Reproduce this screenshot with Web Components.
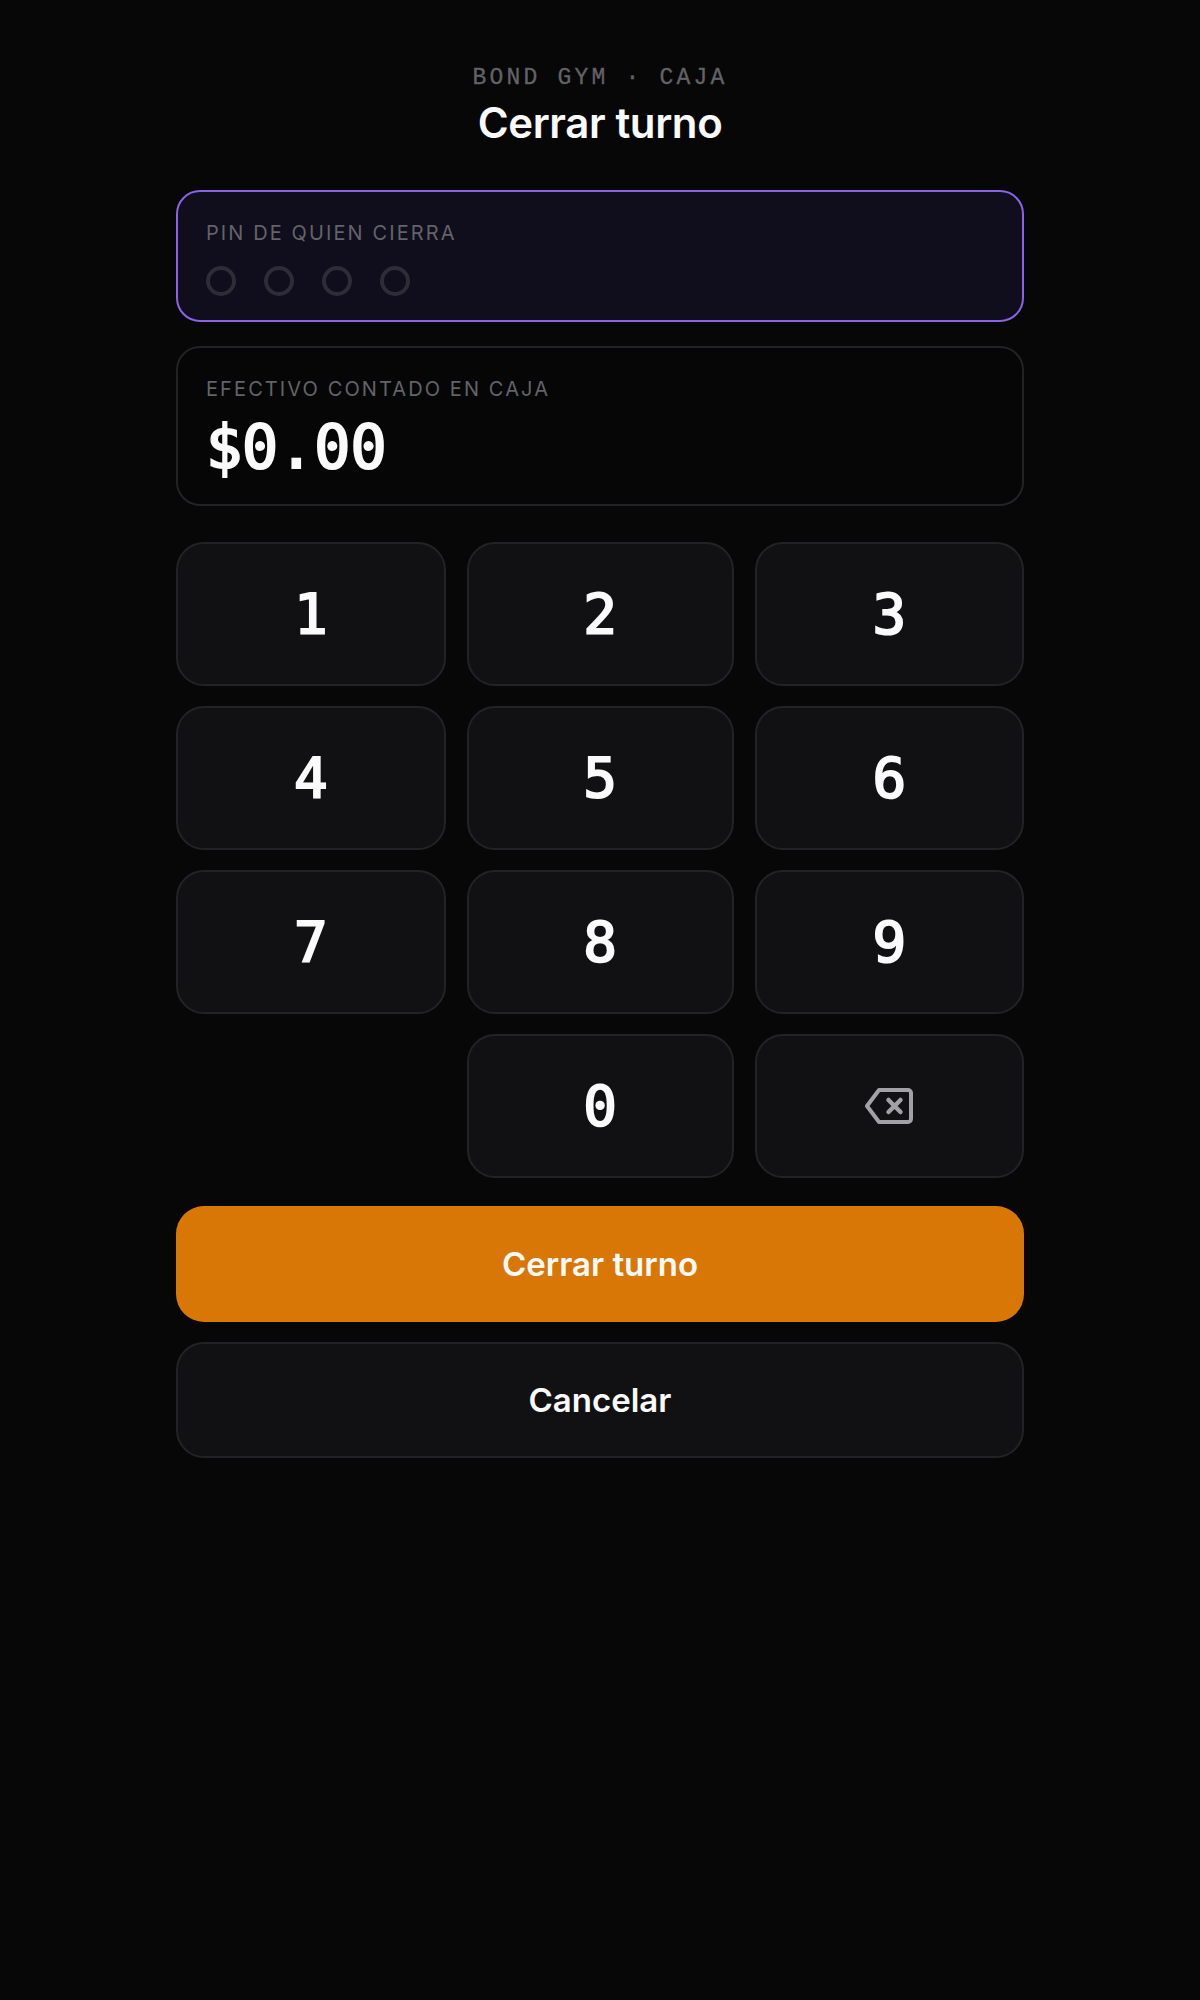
<!DOCTYPE html>
<html lang="es"><head><meta charset="utf-8"><title>Cerrar turno</title>
<style>
html,body{margin:0;background:#070708;height:100%}
body{font-family:Inter,"Noto Sans",sans-serif;color:#fafafa}
</style></head><body>
<close-shift>
  <span slot="eyebrow">BOND GYM · CAJA</span>
  <span slot="title">Cerrar turno</span>
  <field-box slot="pin" active label="PIN DE QUIEN CIERRA"><pin-dots></pin-dots></field-box>
  <field-box slot="cash" label="EFECTIVO CONTADO EN CAJA"><span style="display:block;font:400 60px/72px 'DejaVu Sans Mono',monospace;-webkit-text-stroke:2.2px #fafafa;color:#fafafa;margin-top:6px">$0.00</span></field-box>
  <key-pad slot="pad"></key-pad>
  <action-btn slot="a1" primary>Cerrar turno</action-btn>
  <action-btn slot="a2">Cancelar</action-btn>
</close-shift>
<script>
function def(n,html){customElements.define(n,class extends HTMLElement{connectedCallback(){if(this.shadowRoot)return;const s=this.attachShadow({mode:'open'});s.innerHTML=html(this);}});}
def('close-shift',()=>`<style>
:host{display:block;padding:66px 176px 0}
.eb{text-align:center;font:400 23px/24px "Liberation Mono",monospace;letter-spacing:3.2px;-webkit-text-stroke:.3px #626267;color:#626267;height:24px;}
.t{text-align:center;font:600 42px/50px Inter,sans-serif;letter-spacing:-.4px;color:#fafafa;margin:8px 0 42px}
.st{display:flex;flex-direction:column}
::slotted([slot=cash]){margin-top:24px}
::slotted([slot=pad]){margin-top:36px}
::slotted([slot=a1]){margin-top:28px}
::slotted([slot=a2]){margin-top:20px}
</style><div class="eb"><slot name="eyebrow"></slot></div><div class="t"><slot name="title"></slot></div>
<div class="st"><slot name="pin"></slot><slot name="cash"></slot><slot name="pad"></slot><slot name="a1"></slot><slot name="a2"></slot></div>`);
def('field-box',h=>`<style>
:host{display:block;box-sizing:border-box;border:2px solid #232327;border-radius:24px;padding:29px 28px 22px;background:#060607;height:160px}
:host([active]){border-color:#8b62e8;background:#100d1c;height:132px}
.l{font:400 20px/24px Inter,sans-serif;letter-spacing:2.1px;color:#636369;margin-bottom:10px}
:host([active]) .l{margin-bottom:21px}
</style><div class="l">${h.getAttribute('label')}</div><slot></slot>`);
def('pin-dots',()=>`<style>
:host{display:flex;gap:28px}
i{display:block;box-sizing:border-box;width:30px;height:30px;border:4px solid #2e2c36;border-radius:50%}
</style><i></i><i></i><i></i><i></i>`);
def('key-pad',()=>{const k=['1','2','3','4','5','6','7','8','9','','0','x'];
return `<style>
:host{display:grid;grid-template-columns:269.5fr 267fr 269.5fr;gap:20px 21px}
button{all:unset;box-sizing:border-box;height:144px;border:2px solid #232327;border-radius:28px;background:#111114;display:flex;align-items:center;justify-content:center;font:400 56px/1 "DejaVu Sans Mono",monospace;-webkit-text-stroke:2px #fafafa;color:#fafafa}
.e{height:144px}
svg{width:48px;height:36px;display:block}
</style>`+k.map(c=>c===''?'<div class="e"></div>':c==='x'?`<button aria-label="Borrar"><svg viewBox="0 0 48 36" fill="none" stroke="#a1a1a6" stroke-width="4" stroke-linejoin="round" stroke-linecap="round"><path d="M14 2H43a3 3 0 0 1 3 3V31a3 3 0 0 1-3 3H14L2 18Z"/><path stroke-width="4.5" d="M23.5 12l12 12M35.5 12l-12 12"/></svg></button>`:`<button>${c}</button>`).join('')});
def('action-btn',()=>`<style>
:host{display:flex;box-sizing:border-box;height:116px;padding-top:1px;align-items:center;justify-content:center;border-radius:28px;border:2px solid #232327;background:#111114;font:600 33px/1 Inter,sans-serif;color:#fafafa}
:host([primary]){border:0;background:#d97706}
</style><slot></slot>`);
</script>
</body></html>
